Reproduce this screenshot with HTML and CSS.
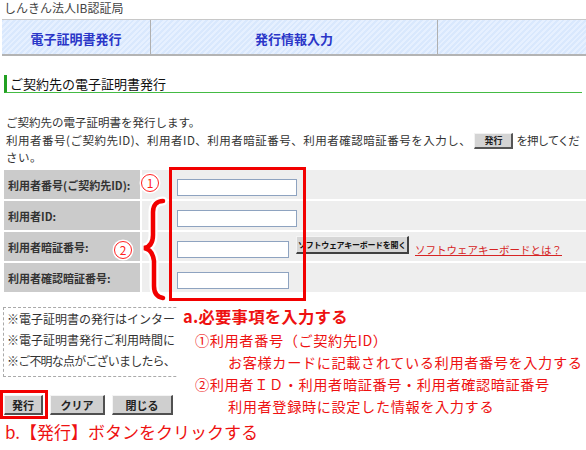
FILE: index.html
```html
<!DOCTYPE html>
<html lang="ja">
<head>
<meta charset="utf-8">
<title>しんきん法人IB認証局</title>
<link rel="stylesheet" href="styles.css">
</head>
<body>
<div class="page">
  <div class="site-title">しんきん法人IB認証局</div>
  <nav class="tabbar">
    <div class="tab">電子証明書発行</div>
    <div class="tab tab-sep">発行情報入力</div>
    <div class="tab tab-sep"></div>
  </nav>
  <h1 class="heading">ご契約先の電子証明書発行</h1>
  <p class="lead">ご契約先の電子証明書を発行します。</p>
  <p class="lead lead2"><span class="lead-main">利用者番号(ご契約先ID)、利用者ID、利用者暗証番号、利用者確認暗証番号を入力し、</span> <span class="mini-btn">発行</span> <span class="tail">を押してくだ</span>さい。</p>

  <div class="form-grid">
    <div class="label">利用者番号(ご契約先ID):</div>
    <div class="value"><input class="field" type="text"></div>
    <div class="label">利用者ID:</div>
    <div class="value"><input class="field" type="password"></div>
    <div class="label">利用者暗証番号:</div>
    <div class="value"><input class="field field-short" type="password"><button class="kbd-btn" type="button">ソフトウェアキーボードを開く</button><a class="kbd-link" href="#">ソフトウェアキーボードとは？</a></div>
    <div class="label">利用者確認暗証番号:</div>
    <div class="value"><input class="field field-short" type="password"></div>
  </div>

  <div class="notes">
    <div class="note-line">※電子証明書の発行はインター</div>
    <div class="note-line">※電子証明書発行ご利用時間に</div>
    <div class="note-line note-tight">※ご不明な点がございましたら、</div>
  </div>

  <div class="actions">
    <button class="btn btn-issue" type="button">発行</button>
    <button class="btn btn-clear" type="button">クリア</button>
    <button class="btn btn-close" type="button">閉じる</button>
  </div>
  <div class="step-b">b.【発行】ボタンをクリックする</div>

  <div class="callout-box"></div>
  <div class="badge badge-1">1</div>
  <svg class="brace" viewBox="0 0 28 110" width="28" height="110">
    <path d="M23 6 C17 6 13 10 13 17 L13 40 C13 48 10 52 4 53 C10 54 13 58 14 66 L14 91 C14 98 17 102 23 103" fill="none" stroke="#fff" stroke-width="9" stroke-linecap="round"/>
    <path d="M23 6 C17 6 13 10 13 17 L13 40 C13 48 10 52 4 53 C10 54 13 58 14 66 L14 91 C14 98 17 102 23 103" fill="none" stroke="#f20000" stroke-width="4.5" stroke-linecap="round"/>
  </svg>
  <div class="badge badge-2">2</div>

  <div class="annot">
    <div class="annot-title">a.必要事項を入力する</div>
    <div class="annot-item">①利用者番号（ご契約先ID）</div>
    <div class="annot-item annot-detail">お客様カードに記載されている利用者番号を入力する</div>
    <div class="annot-item">②利用者ＩＤ・利用者暗証番号・利用者確認暗証番号</div>
    <div class="annot-item annot-detail">利用者登録時に設定した情報を入力する</div>
  </div>
  <div class="issue-box"></div>
</div>
</body>
</html>
```

FILE: styles.css
```css
html, body {
  margin: 0;
  padding: 0;
  overflow: hidden;
  background: #fff;
}

body {
  font-family: "Noto Sans CJK JP", "Noto Sans", sans-serif;
  color: #333;
}

.page {
  position: relative;
  width: 586px;
  height: 450px;
  box-sizing: border-box;
  padding: 0 4px;
}

.site-title {
  font-size: 12px;
  line-height: 15px;
  color: #444;
}

.tabbar {
  display: grid;
  grid-template-columns: 148px 287px 1fr;
  height: 37px;
  box-sizing: border-box;
  margin: 4px -4px 0 -2px;
  border-top: 1px solid #c8c8c8;
  border-bottom: 2px solid #b4b4b4;
  background: repeating-linear-gradient(135deg, #d9e8fd 0 2px, #e6f0ff 2px 4px);
}

.tab {
  display: flex;
  align-items: center;
  justify-content: center;
  font-size: 13px;
  font-weight: bold;
  color: #2a36c8;
  padding-top: 2px;
}

.tab-sep {
  border-left: 1px solid #b0b0b0;
}

.heading {
  margin: 19px 0 0;
  font-size: 13px;
  font-weight: normal;
  line-height: 17px;
  color: #111;
  border-left: 3px solid #22a022;
  border-bottom: 1px solid #44bb44;
  padding-left: 3px;
}

.lead {
  margin: 22px 0 0;
  padding-left: 2px;
  font-size: 11.5px;
  line-height: 14px;
  color: #333;
}

.lead2 {
  margin-top: 2.5px;
  line-height: 16.8px;
  letter-spacing: 0.5px;
}

.mini-btn {
  display: inline-block;
  width: 39px;
  height: 16px;
  box-sizing: border-box;
  vertical-align: middle;
  font-size: 9px;
  font-weight: bold;
  line-height: 13px;
  letter-spacing: 0;
  text-align: center;
  color: #222;
  background: #d4d4d4;
  border: 1px solid;
  border-color: #f2f2f2 #555 #555 #f2f2f2;
  border-width: 1px 2px 2px 1px;
}

.tail {
  letter-spacing: -1px;
}

.form-grid {
  display: grid;
  grid-template-columns: 136px 1fr;
  grid-auto-rows: 29px;
  gap: 2px;
  margin: 4px -4px 0 0;
}

.label {
  display: flex;
  align-items: center;
  padding-left: 4px;
  background: #cbcbcb;
  font-size: 11px;
  font-weight: bold;
  color: #333;
}

.value {
  display: flex;
  align-items: flex-start;
  padding: 9px 0 0 35px;
  background: #eeeeee;
}

.field {
  width: 120px;
  height: 17px;
  box-sizing: border-box;
  margin: 0;
  padding: 0 2px;
  border: 1px solid #8ea3c0;
  background: #fff;
}

.field-short {
  width: 112px;
}

.kbd-btn {
  width: 113px;
  height: 18px;
  margin: -5px 0 0 7px;
  padding: 0;
  box-sizing: border-box;
  font-family: inherit;
  font-size: 8px;
  font-weight: bold;
  line-height: 14px;
  color: #111;
  background: #d6d6d6;
  border-style: solid;
  border-color: #f4f4f4 #404040 #404040 #f4f4f4;
  border-width: 1px 2px 2px 1px;
  letter-spacing: -0.3px;
}

.kbd-link {
  margin: 2px 0 0 6px;
  font-size: 10.5px;
  line-height: 13px;
  color: #d62424;
  text-decoration: underline;
}

.notes {
  margin: 15px 0 0 -1px;
  padding: 0 0 5px 3px;
  border: 1px dashed #aaa;
  font-size: 12px;
  line-height: 21px;
  color: #333;
}

.note-line {
  white-space: nowrap;
}

.note-tight {
  letter-spacing: -0.8px;
}

.actions {
  display: flex;
  gap: 7px;
  margin-top: 18px;
}

.btn {
  height: 20px;
  padding: 0;
  box-sizing: border-box;
  font-family: inherit;
  font-size: 11px;
  font-weight: bold;
  line-height: 16px;
  color: #222;
  background: #cfcfcf;
  border-style: solid;
  border-color: #f4f4f4 #505050 #505050 #f4f4f4;
  border-width: 1px 2px 2px 1px;
}

.btn-issue { width: 39px; }
.btn-clear { width: 55px; }
.btn-close { width: 61px; }

.step-b {
  margin-top: 7px;
  padding-left: 1px;
  font-size: 17px;
  line-height: 20px;
  color: #ee1111;
}

/* overlays */
.callout-box {
  position: absolute;
  left: 169px;
  top: 167px;
  width: 137px;
  height: 134px;
  box-sizing: border-box;
  border: 3px solid #f20000;
}

.badge {
  position: absolute;
  width: 18px;
  height: 18px;
  box-sizing: border-box;
  border-radius: 50%;
  border: 1.3px solid #f22;
  background: #fff;
  box-shadow: 0 0 0 1.5px #fff;
  color: #f22;
  font-size: 12px;
  line-height: 15px;
  text-align: center;
}

.badge-1 { left: 141px; top: 174px; }
.badge-2 { left: 114px; top: 241px; }

.brace {
  position: absolute;
  left: 140px;
  top: 195px;
}

.annot {
  position: absolute;
  left: 177px;
  top: 303px;
  width: 409px;
  height: 117px;
  box-sizing: border-box;
  padding-top: 1px;
  background: #fff;
  color: #ee1111;
  white-space: nowrap;
}

.annot-title {
  padding-left: 6px;
  font-size: 16.4px;
  font-weight: bold;
  line-height: 25px;
  letter-spacing: 0.2px;
}

.annot-item {
  padding-left: 18px;
  font-size: 14.2px;
  line-height: 22px;
  letter-spacing: 0.6px;
}

.annot-detail {
  padding-left: 51px;
}

.issue-box {
  position: absolute;
  left: 0;
  top: 390px;
  width: 48px;
  height: 29px;
  box-sizing: border-box;
  border: 3px solid #f20000;
}
```
